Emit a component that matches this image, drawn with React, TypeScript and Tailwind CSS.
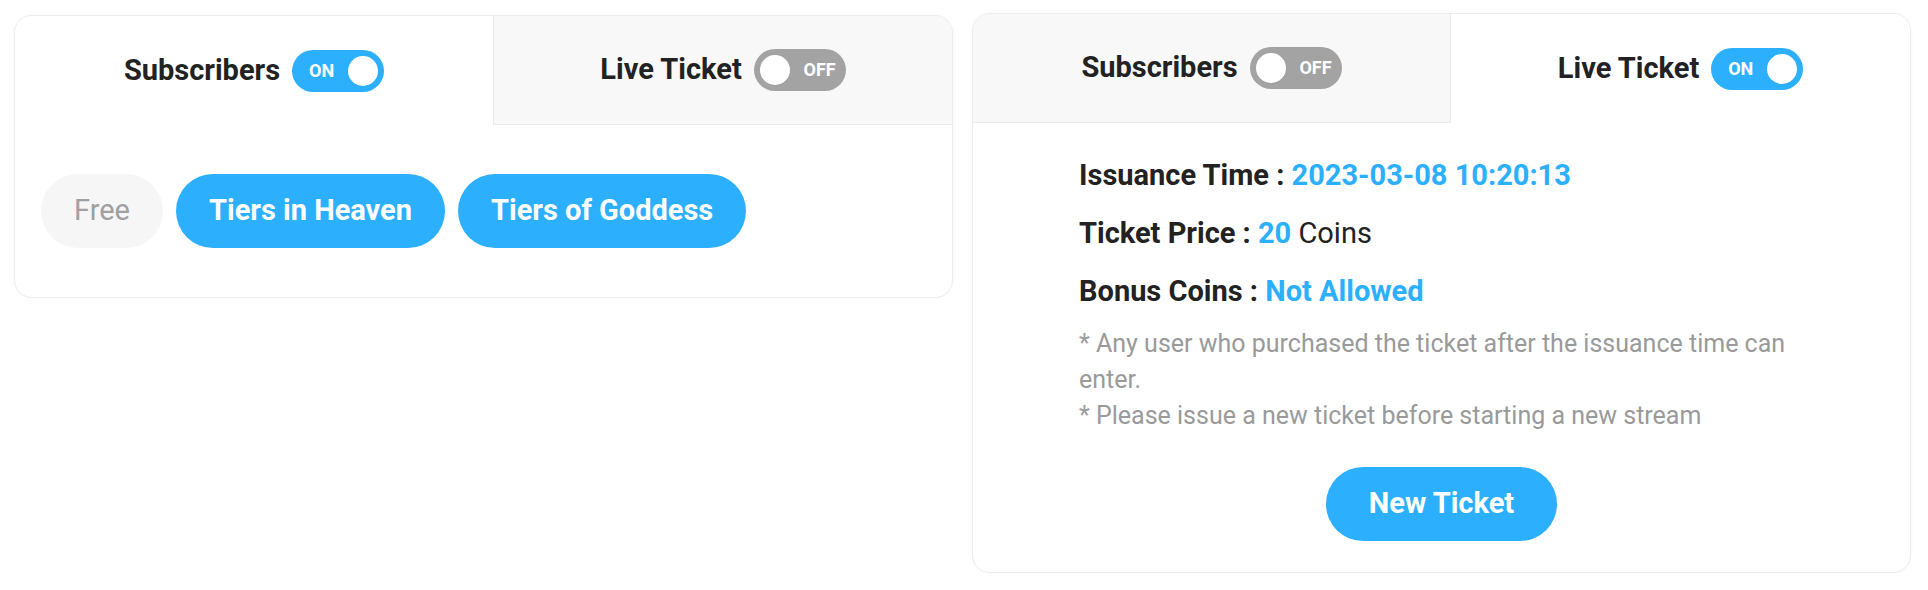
import React from "react";

function Toggle({ on }: { on: boolean }) {
  if (on) {
    return (
      <div className="flex h-[42px] w-[92px] items-center justify-between rounded-full bg-[#2cb0fd] pl-[17px] pr-[4px]">
        <span className="text-[18px] font-bold leading-none text-white">ON</span>
        <span className="h-[34px] w-[34px] rounded-full border-2 border-[#2cb0fd] bg-white" />
      </div>
    );
  }
  return (
    <div className="flex h-[42px] w-[92px] items-center justify-between rounded-full bg-[#a3a3a3] pl-[4px] pr-[10px]">
      <span className="h-[34px] w-[34px] rounded-full border-2 border-[#a3a3a3] bg-white" />
      <span className="text-[18px] font-bold leading-none text-white">OFF</span>
    </div>
  );
}

function Tab({
  label,
  on,
  active,
  side,
  wide,
}: {
  label: string;
  on: boolean;
  active: boolean;
  side: "left" | "right";
  wide?: boolean;
}) {
  const classes = [
    "flex items-center justify-center gap-3",
    wide ? "w-[478px] shrink-0" : "flex-1",
    active ? "bg-white" : "bg-[#f8f8f8] border-b border-[#ebebeb]",
    !active && side === "right" ? "border-l" : "",
    !active && side === "left" ? "border-r" : "",
  ]
    .filter(Boolean)
    .join(" ");
  return (
    <div className={classes}>
      <span className="text-[29px] font-bold text-[#222]">{label}</span>
      <Toggle on={on} />
    </div>
  );
}

function Pill({ label, active }: { label: string; active: boolean }) {
  return (
    <button
      className={
        active
          ? "h-[74px] rounded-full bg-[#2cb0fd] px-[33px] text-[29px] font-bold text-white"
          : "h-[74px] rounded-full bg-[#f6f6f6] px-[33px] text-[29px] text-[#a0a0a0]"
      }
    >
      {label}
    </button>
  );
}

export default function App() {
  return (
    <div className="flex items-start gap-[19px] bg-white pl-[14px] pt-[13px] font-['Roboto',sans-serif]">
      {/* Subscribers panel */}
      <div className="mt-[2px] w-[939px] overflow-hidden rounded-[18px] border border-[#ececec] bg-white shadow-[0_0_4px_rgba(0,0,0,0.03)]">
        <div className="flex h-[109px]">
          <Tab label="Subscribers" on active side="left" wide />
          <Tab label="Live Ticket" on={false} active={false} side="right" />
        </div>
        <div className="flex gap-[13px] px-[26px] py-[49px]">
          <Pill label="Free" active={false} />
          <Pill label="Tiers in Heaven" active />
          <Pill label="Tiers of Goddess" active />
        </div>
      </div>

      {/* Live ticket panel */}
      <div className="w-[939px] overflow-hidden rounded-[18px] border border-[#ececec] bg-white shadow-[0_0_4px_rgba(0,0,0,0.03)]">
        <div className="flex h-[109px]">
          <Tab label="Subscribers" on={false} active={false} side="left" wide />
          <Tab label="Live Ticket" on active side="right" />
        </div>
        <div className="flex flex-col px-[106px] pb-[31px] pt-[34px]">
          <div className="flex flex-col gap-[22px] text-[29px] leading-[36px] text-[#222]">
            <p>
              <span className="font-bold">Issuance Time : </span>
              <span className="font-bold text-[#2cb0fd]">2023-03-08 10:20:13</span>
            </p>
            <p>
              <span className="font-bold">Ticket Price : </span>
              <span className="font-bold text-[#2cb0fd]">20</span> Coins
            </p>
            <p>
              <span className="font-bold">Bonus Coins : </span>
              <span className="font-bold text-[#2cb0fd]">Not Allowed</span>
            </p>
          </div>
          <div className="mt-[17px] text-[25px] leading-[36px] text-[#9a9a9a]">
            <p>* Any user who purchased the ticket after the issuance time can enter.</p>
            <p>* Please issue a new ticket before starting a new stream</p>
          </div>
          <div className="mt-[33px] flex justify-center">
            <button className="h-[74px] w-[231px] rounded-full bg-[#2cb0fd] text-[29px] font-bold text-white">
              New Ticket
            </button>
          </div>
        </div>
      </div>
    </div>
  );
}
